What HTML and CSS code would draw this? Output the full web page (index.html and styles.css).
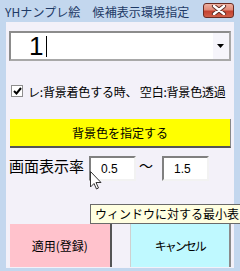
FILE: index.html
```html
<!DOCTYPE html>
<html lang="ja">
<head>
    <meta charset="UTF-8">
    <title>YHナンプレ絵 候補表示環境指定</title>
    <link rel="stylesheet" href="styles.css">
</head>
<body>
    <div class="window">
        <div class="titlebar">
            <span class="title">YHナンプレ絵　候補表示環境指定</span>
            <button class="close-btn" aria-label="閉じる">
                <svg width="16" height="10" viewBox="0 0 16 10">
                    <path d="M3 1 L13 9 M13 1 L3 9" stroke="#5a2a24" stroke-width="4.2" stroke-linecap="round"/>
                    <path d="M3 1 L13 9 M13 1 L3 9" stroke="#ffffff" stroke-width="2.4" stroke-linecap="round"/>
                </svg>
            </button>
        </div>

        <div class="client">
            <!-- 候補数字の選択 -->
            <div class="combo">
                <div class="combo-text">1<span class="caret"></span></div>
                <div class="combo-btn">
                    <svg width="7" height="4" viewBox="0 0 7 4"><path d="M0 0 H7 L3.5 4 Z" fill="#000"/></svg>
                </div>
            </div>

            <label class="check-row">
                <span class="checkbox">
                    <svg width="9" height="8" viewBox="0 0 9 8"><path d="M1 4 L3.5 6.5 L8 1" stroke="#000" stroke-width="2" fill="none"/></svg>
                </span>
                <span class="check-label">レ:背景着色する時、 空白:背景色透過</span>
            </label>

            <button class="color-btn">背景色を指定する</button>

            <div class="rate-row">
                <span class="rate-label">画面表示率</span>
                <input class="rate-input" type="text" value="0.5">
                <span class="tilde">〜</span>
                <input class="rate-input" type="text" value="1.5">
            </div>

            <div class="action-row">
                <button class="btn-apply">適用(登録)</button>
                <button class="btn-cancel">キャンセル</button>
            </div>
        </div>

        <!-- Tooltip and mouse pointer -->
        <div class="tooltip">ウィンドウに対する最小表</div>
        <svg class="pointer" width="12" height="19" viewBox="0 0 12 19">
            <path d="M0.5 0.5 V16 L4 12.5 L6.5 18 L8.5 17 L6 11.5 H11 Z" fill="#fff" stroke="#333" stroke-width="1"/>
        </svg>
    </div>
</body>
</html>
```

FILE: styles.css
```css
* {
    margin: 0;
    padding: 0;
    box-sizing: border-box;
}

body {
    font-family: "Noto Sans CJK JP", "Liberation Sans", sans-serif;
    background: #ffffff;
}

.window {
    position: relative;
    width: 240px;
    height: 271px;
    background: #c3d7ee;
    padding: 0 6px 3px 6px;
    overflow: hidden;
}

/* Title bar */
.titlebar {
    height: 22px;
    display: flex;
    align-items: center;
    justify-content: space-between;
    margin-left: -1px;
}

.title {
    font-size: 12px;
    color: #1e3a66;
    white-space: nowrap;
    letter-spacing: 0.1px;
}

.close-btn {
    width: 31px;
    height: 15px;
    margin-top: -2px;
    border: 1px solid #6b2b22;
    border-radius: 3px;
    background: linear-gradient(#eeb0a0 0%, #e08a78 45%, #c4412f 55%, #d0604a 100%);
    display: flex;
    align-items: center;
    justify-content: center;
}

/* Client area */
.client {
    height: 246px;
    background: #f3f1f9;
    display: flex;
    flex-direction: column;
    padding: 9px 3px 0 3px;
}

.combo {
    height: 30px;
    display: flex;
    border: 2px solid #8c8c8c;
    border-bottom-color: #a8a8a8;
    border-right-color: #a8a8a8;
    background: #ffffff;
}

.combo-text {
    flex: 1;
    display: flex;
    align-items: center;
    padding-left: 18px;
    font-family: "Liberation Sans", sans-serif;
    font-size: 26px;
    line-height: 1;
    color: #000;
}

.caret {
    display: inline-block;
    width: 1px;
    height: 21px;
    background: #000;
    margin-left: 3px;
}

.combo-btn {
    width: 16px;
    display: flex;
    align-items: center;
    justify-content: center;
    background: #f6f5fb;
    padding-right: 1px;
}

.check-row {
    margin-top: 23px;
    height: 14px;
    display: flex;
    align-items: center;
    padding-left: 2px;
}

.checkbox {
    width: 12px;
    height: 12px;
    border: 1px solid #8e8e8e;
    background: #ffffff;
    display: flex;
    align-items: center;
    justify-content: center;
}

.check-label {
    margin-left: 5px;
    font-size: 12px;
    color: #000;
    white-space: nowrap;
    letter-spacing: -0.2px;
}

.color-btn {
    margin: 21px 0 0 1px;
    height: 29px;
    background: #ffff00;
    border: none;
    border-bottom: 2px solid #555555;
    border-right: 1px solid #888888;
    font-family: inherit;
    font-size: 12px;
    color: #000;
}

.rate-row {
    margin-top: 8px;
    height: 25px;
    display: flex;
    align-items: center;
}

.rate-label {
    font-size: 15px;
    color: #000;
    width: 80px;
    margin-top: -6px;
}

.rate-input {
    width: 47px;
    height: 25px;
    border: 2px solid #f2f2f2;
    border-top-color: #808080;
    border-left-color: #808080;
    background: #ffffff;
    font-family: "Liberation Sans", sans-serif;
    font-size: 12px;
    padding-left: 10px;
    color: #000;
}

.tilde {
    width: 26px;
    font-size: 14px;
    padding-left: 3px;
    margin-top: -8px;
}

.action-row {
    margin-top: 43px;
    height: 43px;
    display: flex;
    gap: 18px;
    padding-left: 1px;
}

.action-row button {
    width: 102px;
    border: none;
    font-family: inherit;
    font-size: 12px;
    color: #000;
}

.btn-apply {
    background: #ffc2cc;
    border-right: 2px solid #555555 !important;
}

.btn-cancel {
    background: #bff9ff;
    border-right: 2px solid #8a8a8a !important;
    border-left: 1px solid #d0d0d0 !important;
    letter-spacing: -2px;
}

/* Overlay: tooltip + pointer */
.tooltip {
    position: absolute;
    left: 90px;
    top: 204px;
    width: 160px;
    height: 20px;
    padding: 0 4px;
    border: 1px solid #6a6a6a;
    background: #ffffe1;
    font-size: 12px;
    line-height: 18px;
    color: #000;
    white-space: nowrap;
}

.pointer {
    position: absolute;
    left: 90px;
    top: 171px;
}
```
